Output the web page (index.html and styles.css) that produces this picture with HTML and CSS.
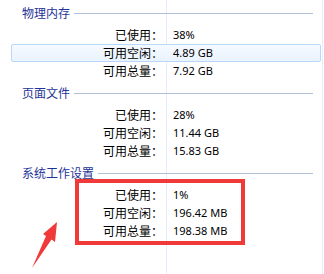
FILE: index.html
```html
<!DOCTYPE html>
<html lang="zh-CN">
<head>
  <meta charset="UTF-8">
  <meta name="viewport" content="width=device-width, initial-scale=1.0">
  <title>内存</title>
  <link rel="stylesheet" href="styles.css">
</head>
<body>
  <div class="panel">
    <!-- 物理内存 -->
    <section class="group">
      <div class="group-head">
        <span class="group-title">物理内存</span>
        <span class="group-rule"></span>
      </div>
      <div class="row"><span class="label">已使用：</span><span class="value">38%</span></div>
      <div class="row selected"><span class="label">可用空闲：</span><span class="value">4.89 GB</span></div>
      <div class="row"><span class="label">可用总量：</span><span class="value">7.92 GB</span></div>
    </section>

    <!-- 页面文件 -->
    <section class="group">
      <div class="group-head">
        <span class="group-title">页面文件</span>
        <span class="group-rule"></span>
      </div>
      <div class="row"><span class="label">已使用：</span><span class="value">28%</span></div>
      <div class="row"><span class="label">可用空闲：</span><span class="value">11.44 GB</span></div>
      <div class="row"><span class="label">可用总量：</span><span class="value">15.83 GB</span></div>
    </section>

    <!-- 系统工作设置 -->
    <section class="group">
      <div class="group-head">
        <span class="group-title">系统工作设置</span>
        <span class="group-rule"></span>
      </div>
      <div class="row"><span class="label">已使用：</span><span class="value">1%</span></div>
      <div class="row"><span class="label">可用空闲：</span><span class="value">196.42 MB</span></div>
      <div class="row"><span class="label">可用总量：</span><span class="value">198.38 MB</span></div>
    </section>

    <!-- annotation -->
    <div class="callout"></div>
    <svg class="arrow" width="324" height="274" viewBox="0 0 324 274">
      <polygon points="57,222 55,242 51.5,239.5 32,268 46,236 43,234" fill="#f03a3a"/>
    </svg>
  </div>
</body>
</html>
```

FILE: styles.css
```css
/* General */
body {
  margin: 0;
  background: #fff;
  font-family: "Noto Sans CJK SC", sans-serif;
  font-size: 12px;
  color: #000;
}

/* List view with two column separators */
.panel {
  position: relative;
  width: 324px;
  height: 274px;
  overflow: hidden;
  background:
    linear-gradient(#e5edf9, #e5edf9) 166px 0 / 1px 100% no-repeat,
    linear-gradient(#e5edf9, #e5edf9) 322px 0 / 1px 100% no-repeat,
    #fff;
}

/* Group header */
.group-head {
  display: flex;
  align-items: center;
  height: 26px;
  padding: 0 11px 0 22px;
  gap: 4px;
}

.group-title {
  color: #1e3496;
  line-height: 14px;
}

.group-rule {
  flex: 1;
  height: 1px;
  background: #b2bed8;
}

/* Rows */
.row {
  display: flex;
  align-items: center;
  height: 18px;
  margin: 0 3px 0 11px;
  box-sizing: border-box;
  border: 1px solid transparent;
  border-radius: 2px;
  line-height: 16px;
}

.row.selected {
  border-color: #b9d7fb;
  background: linear-gradient(#f5faff, #eaf3fe);
}

.label {
  width: 151px;
  text-align: right;
}

.value {
  padding-left: 10px;
  font-family: "Noto Sans", sans-serif;
  font-size: 11px;
}

/* Red annotation */
.callout {
  position: absolute;
  left: 75px;
  top: 179px;
  width: 170px;
  height: 66px;
  box-sizing: border-box;
  border: 4px solid #f03a3a;
}

.arrow {
  position: absolute;
  left: 0;
  top: 0;
}
```
